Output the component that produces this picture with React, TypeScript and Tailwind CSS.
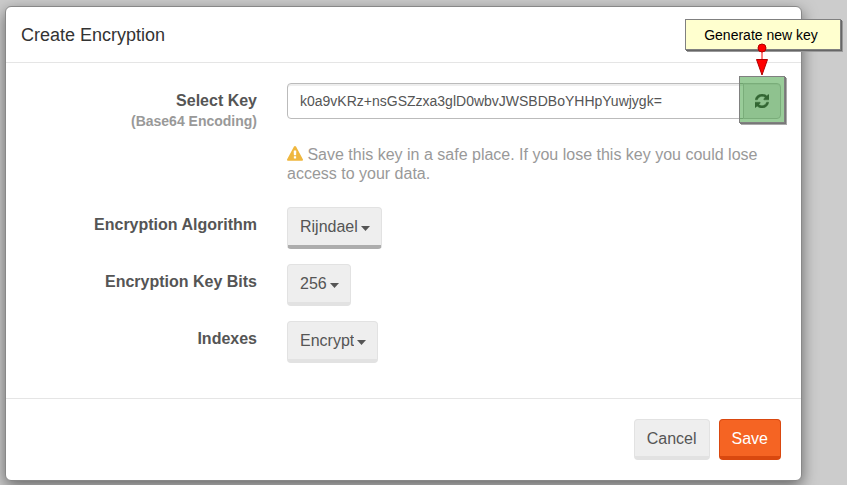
import type { ReactNode } from "react";

function WarningIcon() {
  return (
    <svg viewBox="0 0 1792 1792" className="inline-block h-4 w-4 fill-[#efb73e] align-[-2px]" aria-hidden="true">
      <path d="M1024 1375v-190q0-14-9.5-23.5t-22.5-9.5h-192q-13 0-22.5 9.5t-9.500 23.5v190q0 14 9.5 23.5t22.5 9.5h192q13 0 22.5-9.5t9.5-23.5zm-2-374l18-459q0-12-10-19-13-11-24-11h-220q-11 0-24 11-10 7-10 21l17 457q0 10 10 16.5t24 6.5h185q14 0 23.5-6.5t10.5-16.5zm-14-934l768 1408q35 63-2 126-17 29-46.5 46t-63.5 17h-1536q-34 0-63.5-17t-46.5-46q-37-63-2-126l768-1408q17-31 47-49t65-18 65 18 47 49z" />
    </svg>
  );
}

function RefreshIcon() {
  return (
    <svg viewBox="0 0 1536 1536" className="h-3.5 w-3.5 fill-[#555] stroke-[#555]" strokeWidth="50" aria-hidden="true">
      <path d="M1511 928q0 5-1 7-64 268-268 434.5t-478 166.5q-146 0-282.5-55t-243.5-157l-129 129q-19 19-45 19t-45-19-19-45v-448q0-26 19-45t45-19h448q26 0 45 19t19 45-19 45l-137 137q71 66 161 102t187 36q134 0 250-65t186-179q11-17 53-117 8-23 30-23h192q13 0 22.5 9.5t9.5 22.5zm25-800v448q0 26-19 45t-45 19h-448q-26 0-45-19t-19-45 19-45l138-138q-148-137-349-137-134 0-250 65t-186 179q-11 17-53 117-8 23-30 23h-199q-13 0-22.5-9.5t-9.5-22.5v-7q65-268 270-434.5t480-166.5q146 0 284 55.5t245 156.5l130-129q19-19 45-19t45 19 19 45z" />
    </svg>
  );
}

function Row({ id, label, hint, children }: { id: string; label: string; hint?: string; children: ReactNode }) {
  return (
    <div className="grid grid-cols-[231px_minmax(0,1fr)] gap-[30px]">
      <label htmlFor={id} className="pt-2 text-right text-base leading-5 font-bold text-[#555]">
        {label}
        {hint && <span className="block text-sm leading-5 text-[#999]">{hint}</span>}
      </label>
      <div>{children}</div>
    </div>
  );
}

function Dropdown({ id, value, active }: { id: string; value: string; active?: boolean }) {
  return (
    <div className="relative inline-block align-top">
      <select
        id={id}
        className={`field-sizing-content block h-[42px] appearance-none rounded border border-b-4 bg-[#eee] pr-[23px] pl-3 text-base text-[#555] ${
          active ? "border-[#e2e2e2] border-b-[#adadad]" : "border-[#e2e2e2]"
        }`}
      >
        <option>{value}</option>
      </select>
      <svg viewBox="0 0 9 5" className="pointer-events-none absolute top-[19px] right-3 h-[5px] w-[9px] fill-[#555]" aria-hidden="true">
        <path d="M0 0h9L4.500 5z" />
      </svg>
    </div>
  );
}

function Callout() {
  return (
    <div className="pointer-events-none absolute -top-[7px] right-0">
      <div className="absolute right-[-60px] bottom-[26px] flex h-[31px] w-[156px] items-center justify-center border border-[#808080] bg-[#ffffcf] pr-1 text-sm text-black shadow-[1px_1px_0_#666,2px_2px_0_#999]">
        Generate new key
      </div>
      <svg viewBox="0 0 14 34" className="absolute right-3 bottom-0 h-[34px] w-3.5" aria-hidden="true">
        <path d="M7 6v15" stroke="#ff0000" />
        <circle cx="7" cy="6" r="4" fill="#ff0000" stroke="#b00000" />
        <path d="M1.500 17.500h11L7 33z" fill="#ff0000" stroke="#b00000" />
      </svg>
    </div>
  );
}

export default function App() {
  return (
    <main className="min-h-screen bg-[#ccc] pt-1.5 pr-[45px] pb-1 pl-[5px] font-['Liberation_Sans',Arial,sans-serif]">
      <form
        className="rounded-md border border-[#888] bg-white shadow-[0_5px_15px_rgba(0,0,0,0.5)]"
        onSubmit={(event) => event.preventDefault()}
      >
        <header className="border-b border-[#e5e5e5] px-[15px] pt-4 pb-[15px]">
          <h1 className="text-lg leading-6 text-[#333]">Create Encryption</h1>
        </header>

        <div className="flex flex-col gap-[15px] p-5 pb-[35px]">
          <Row id="key" label="Select Key" hint="(Base64 Encoding)">
            <div className="relative flex h-9">
              <input
                id="key"
                defaultValue="k0a9vKRz+nsGSZzxa3glD0wbvJWSBDBoYHHpYuwjygk="
                className="min-w-0 flex-1 rounded-l border border-[#bbb] px-3 text-sm text-[#555] shadow-[inset_0_2px_0_#eee]"
              />
              <button
                type="button"
                aria-label="Generate new key"
                className="-ml-px flex w-[38px] items-center justify-center rounded-r border border-[#ccc] bg-[#eee] shadow-[inset_0_1px_0_#e2e2e2]"
              >
                <RefreshIcon />
              </button>
              <div className="pointer-events-none absolute -top-[7px] -right-1 h-[47px] w-[46px] border border-[#808080] bg-[#008000]/40 bg-clip-padding shadow-[1px_1px_0_#777,2px_2px_0_#aaa]" />
              <Callout />
            </div>
            <p className="mt-[26px] mb-[9px] text-base leading-[19px] text-[#999]">
              <WarningIcon /> Save this key in a safe place. If you lose this key you could lose access to your data.
            </p>
          </Row>
          <Row id="algorithm" label="Encryption Algorithm">
            <Dropdown id="algorithm" value="Rijndael" active />
          </Row>
          <Row id="bits" label="Encryption Key Bits">
            <Dropdown id="bits" value="256" />
          </Row>
          <Row id="indexes" label="Indexes">
            <Dropdown id="indexes" value="Encrypt" />
          </Row>
        </div>

        <footer className="flex justify-end gap-[9px] border-t border-[#e5e5e5] p-5">
          <button type="button" className="h-[41px] rounded border border-b-4 border-[#e2e2e2] bg-[#eee] px-3 pt-0.5 text-base text-[#555]">
            Cancel
          </button>
          <button type="submit" className="h-[41px] rounded border border-b-4 border-[#d9480f] bg-[#f56423] px-3 pt-0.5 text-base text-white">
            Save
          </button>
        </footer>
      </form>
    </main>
  );
}
